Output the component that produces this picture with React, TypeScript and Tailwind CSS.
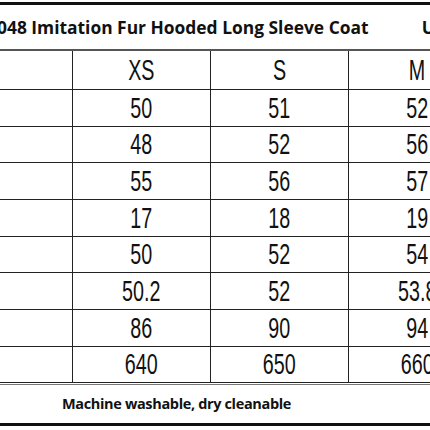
export default function App() {
  const rows = [
    ["50", "51", "52"],
    ["48", "52", "56"],
    ["55", "56", "57"],
    ["17", "18", "19"],
    ["50", "52", "54"],
    ["50.2", "52", "53.8"],
    ["86", "90", "94"],
    ["640", "650", "660"],
  ]
  const heights = ["h-[37px]", "h-[36px]", "h-[37px]", "h-[37px]", "h-[36px]", "h-[37px]", "h-[37px]", "h-[36px]"]

  return (
    <div className="w-[430px] h-[430px] overflow-hidden bg-white relative font-['Open_Sans',sans-serif]">
      <div className="mt-[2px] h-[3px] bg-[#111]"></div>
      <div className="h-[44px] flex items-center whitespace-nowrap">
        <div className="-ml-[3px] text-[17.4px] font-bold text-[#111]">
          048 Imitation Fur Hooded Long Sleeve Coat
        </div>
        <div className="ml-auto -mr-[5px] text-[17.4px] font-bold text-[#111]">U</div>
      </div>
      <div className="w-[486px] border-t-2 border-[#555]">
        <div className="grid grid-cols-[72px_138px_138px_138px] h-[39px] border-b border-[#222]">
          <div></div>
          <Cell text="XS" />
          <Cell text="S" />
          <Cell text="M" />
        </div>
        {rows.map((r, i) => (
          <div key={i} className={`grid grid-cols-[72px_138px_138px_138px] border-b border-[#222] ${heights[i]}`}>
            <div></div>
            {r.map((v, j) => (
              <Cell key={j} text={v} />
            ))}
          </div>
        ))}
        <div className="h-[2px] border-b border-[#777]"></div>
      </div>
      <div className="h-[38px] flex items-center">
        <div className="ml-[62px] text-[14.5px] font-bold text-[#111] tracking-[-0.35px]">Machine washable, dry cleanable</div>
      </div>
      <div className="h-[3px] bg-[#111]"></div>
    </div>
  )
}

function Cell({ text }: { text: string }) {
  return (
    <div className="border-l border-[#222] flex items-center justify-center overflow-visible">
      <span className="inline-block scale-x-[0.68] text-[29px] leading-none text-[#111] font-['Liberation_Sans',sans-serif]">
        {text}
      </span>
    </div>
  )
}
